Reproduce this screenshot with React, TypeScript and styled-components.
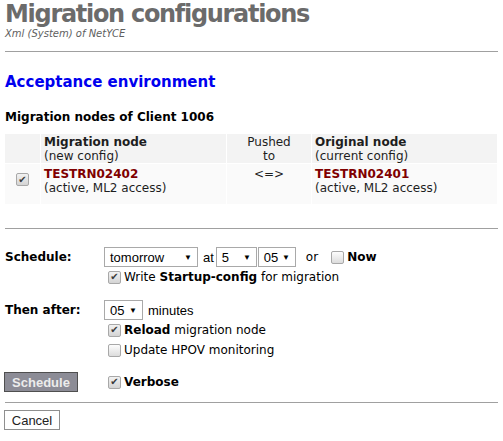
import React from 'react';
import styled, { createGlobalStyle } from 'styled-components';

const GlobalStyle = createGlobalStyle`
  body {
    margin: 0;
    background: #fff;
    font-family: Verdana, "DejaVu Sans", sans-serif;
    font-size: 12px;
    color: #000;
  }
`;

const Page = styled.div`
  padding: 0 5px;
  width: 493px;
`;

const Title = styled.h1`
  margin: 0;
  font-size: 24px;
  line-height: 29px;
  font-weight: bold;
  letter-spacing: -1.3px;
  color: #6b6b6b;
`;

const Subtitle = styled.div`
  margin-top: -2px;
  font-size: 10px;
  font-style: italic;
  color: #5e5e5e;
  line-height: 13px;
`;

const Rule = styled.div<{ $top?: number; $bottom?: number }>`
  border-top: 1px solid #a0a0a0;
  margin-top: ${p => p.$top ?? 0}px;
  margin-bottom: ${p => p.$bottom ?? 0}px;
`;

const EnvHeading = styled.h2`
  margin: 20px 0 0;
  font-size: 15px;
  line-height: 20px;
  color: #0000ee;
`;

const SectionHeading = styled.h3`
  margin: 17px 0 0;
  font-size: 12px;
  line-height: 16px;
`;

const NodeTable = styled.table`
  margin-top: 8px;
  margin-left: -1px;
  width: 494px;
  border-collapse: separate;
  border-spacing: 1px;
  color: #1e1e1e;
`;

const HeadCell = styled.td<{ $center?: boolean; $width?: number }>`
  background: #f3f3f3;
  padding: 1px 3px 0;
  vertical-align: top;
  line-height: 14px;
  text-align: ${p => (p.$center ? 'center' : 'left')};
  width: ${p => (p.$width ? `${p.$width}px` : 'auto')};
`;

const BodyCell = styled.td<{ $center?: boolean }>`
  background: #fafafa;
  padding: 3px 3px 9px;
  vertical-align: top;
  line-height: 14px;
  text-align: ${p => (p.$center ? 'center' : 'left')};
`;

const NodeName = styled.b`
  color: #800000;
`;

const CheckCell = styled(BodyCell)`
  text-align: center;
  padding-top: 9px;
  line-height: 0;
`;

const Box = styled.span<{ $checked?: boolean }>`
  display: inline-flex;
  align-items: center;
  justify-content: center;
  box-sizing: border-box;
  width: 13px;
  height: 13px;
  border: 1px solid #a8a8a8;
  border-radius: 2px;
  background: ${p =>
    p.$checked
      ? 'linear-gradient(#f2f2f2, #d4d4d4)'
      : 'linear-gradient(#fdfdfd, #dcdcdc)'};
  color: #3a3a3a;
  font-size: 10px;
  line-height: 1;
  vertical-align: middle;
  flex: none;
`;

const Check = ({ checked }: { checked?: boolean }) => (
  <Box $checked={checked}>{checked ? '✔' : ''}</Box>
);

const Form = styled.div`
  margin-top: 18px;
  display: grid;
  grid-template-columns: 99px 1fr;
  align-items: center;
`;

const Label = styled.div`
  font-weight: bold;
  font-size: 12px;
`;

const Controls = styled.div`
  display: flex;
  align-items: center;
  height: 20px;
  font-family: Arial, "Liberation Sans", sans-serif;
  font-size: 13px;
`;

const Word = styled.span<{ $left?: number; $right?: number }>`
  margin-left: ${p => p.$left ?? 0}px;
  margin-right: ${p => p.$right ?? 0}px;
`;

const OptionLine = styled.label<{ $bold?: boolean }>`
  display: flex;
  align-items: center;
  gap: 3px;
  height: 20px;
  padding-left: 4px;
  font-weight: ${p => (p.$bold ? 'bold' : 'normal')};
`;

const Or = styled.span`
  font-family: Verdana, "DejaVu Sans", sans-serif;
  font-size: 12px;
  margin-left: 10px;
`;

const NowLabel = styled.span`
  display: inline-flex;
  align-items: center;
  gap: 3px;
  margin-left: 13px;
  font-family: Verdana, "DejaVu Sans", sans-serif;
  font-weight: bold;
  font-size: 12px;
`;

const SelectBox = styled.span<{ $width: number; $left?: number }>`
  display: inline-flex;
  align-items: center;
  justify-content: space-between;
  box-sizing: border-box;
  width: ${p => p.$width}px;
  height: 20px;
  margin-left: ${p => p.$left ?? 0}px;
  padding: 0 5px;
  border: 1px solid #a9a9a9;
  background: #fff;
  font-family: Arial, "Liberation Sans", sans-serif;
  font-size: 13px;
  color: #000;
`;

const Arrow = styled.span`
  font-size: 8px;
`;

const Select = ({
  value,
  width,
  left,
}: {
  value: string;
  width: number;
  left?: number;
}) => (
  <SelectBox $width={width} $left={left}>
    <span>{value}</span>
    <Arrow>▼</Arrow>
  </SelectBox>
);

const SubmitButton = styled.button`
  box-sizing: border-box;
  width: 74px;
  height: 20px;
  margin-left: -1px;
  padding: 0;
  background: #8c8c96;
  border: 1px solid #4f4f4f;
  color: #ececec;
  font-family: Arial, "Liberation Sans", sans-serif;
  font-weight: bold;
  font-size: 13px;
`;

const CancelButton = styled.button`
  box-sizing: border-box;
  width: 56px;
  height: 20px;
  margin-left: -1px;
  padding: 0;
  background: #fff;
  border: 1px solid #8f8f8f;
  color: #222;
  font-family: Arial, "Liberation Sans", sans-serif;
  font-size: 13px;
`;

const Gap = styled.div<{ $h: number }>`
  grid-column: 1 / -1;
  height: ${p => p.$h}px;
`;

export default function App() {
  return (
    <Page>
      <GlobalStyle />
      <Title>Migration configurations</Title>
      <Subtitle>Xml (System) of NetYCE</Subtitle>
      <Rule $top={11} />
      <EnvHeading>Acceptance environment</EnvHeading>
      <SectionHeading>Migration nodes of Client 1006</SectionHeading>
      <NodeTable>
        <tbody>
          <tr>
            <HeadCell $width={29} />
            <HeadCell $width={179}>
              <b>Migration node</b>
              <br />
              (new config)
            </HeadCell>
            <HeadCell $center $width={78}>
              Pushed
              <br />
              to
            </HeadCell>
            <HeadCell>
              <b>Original node</b>
              <br />
              (current config)
            </HeadCell>
          </tr>
          <tr>
            <CheckCell>
              <Check checked />
            </CheckCell>
            <BodyCell>
              <NodeName>TESTRN02402</NodeName>
              <br />
              (active, ML2 access)
            </BodyCell>
            <BodyCell $center>&lt;=&gt;</BodyCell>
            <BodyCell>
              <NodeName>TESTRN02401</NodeName>
              <br />
              (active, ML2 access)
            </BodyCell>
          </tr>
        </tbody>
      </NodeTable>
      <Rule $top={23} />
      <Form>
        <Label>Schedule:</Label>
        <Controls>
          <Select value="tomorrow" width={94} />
          <Word $left={5} $right={2}>
            at
          </Word>
          <Select value="5" width={41} />
          <Select value="05" width={38} left={1} />
          <Or>or</Or>
          <NowLabel>
            <Check />
            Now
          </NowLabel>
        </Controls>
        <div />
        <OptionLine>
          <Check checked />
          <span>
            Write <b>Startup-config</b> for migration
          </span>
        </OptionLine>
        <Gap $h={13} />
        <Label>Then after:</Label>
        <Controls>
          <Select value="05" width={39} />
          <Word $left={5}>minutes</Word>
        </Controls>
        <div />
        <OptionLine>
          <Check checked />
          <span>
            <b>Reload</b> migration node
          </span>
        </OptionLine>
        <div />
        <OptionLine>
          <Check />
          <span>Update HPOV monitoring</span>
        </OptionLine>
        <Gap $h={12} />
        <div>
          <SubmitButton>Schedule</SubmitButton>
        </div>
        <OptionLine $bold>
          <Check checked />
          <span>Verbose</span>
        </OptionLine>
      </Form>
      <Rule $top={10} $bottom={7} />
      <CancelButton>Cancel</CancelButton>
    </Page>
  );
}
